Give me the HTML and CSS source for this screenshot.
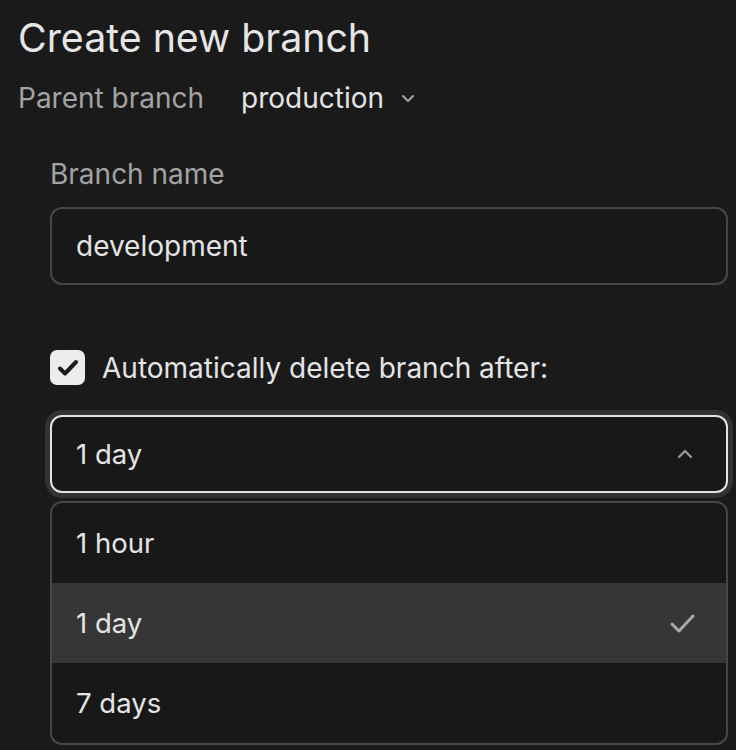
FILE: index.html
```html
<!DOCTYPE html>
<html lang="en">
<head>
    <meta charset="UTF-8">
    <meta name="viewport" content="width=device-width, initial-scale=1.0">
    <title>Create new branch</title>
    <link rel="stylesheet" href="styles.css">
</head>
<body>
    <div class="page">
        <h1 class="title">Create new branch</h1>
        <div class="parent-row">
            <span class="parent-label">Parent branch</span>
            <button class="parent-select">
                production
                <svg width="16" height="16" viewBox="0 0 16 16"><path d="M3 6l5 5 5-5" fill="none" stroke="currentColor" stroke-width="2" stroke-linecap="round" stroke-linejoin="round"/></svg>
            </button>
        </div>
        <div class="form">
            <label class="field-label" for="branch-name">Branch name</label>
            <input class="text-input" id="branch-name" type="text" value="development">

            <label class="check-row">
                <span class="checkbox">
                    <svg width="24" height="24" viewBox="0 0 24 24"><path d="M4 12.5l5 5L20 6" fill="none" stroke="currentColor" stroke-width="4" stroke-linecap="round" stroke-linejoin="round"/></svg>
                </span>
                Automatically delete branch after:
            </label>

            <div class="select open">
                <span>1 day</span>
                <svg width="18" height="18" viewBox="0 0 18 18"><path d="M3 12l6-6 6 6" fill="none" stroke="currentColor" stroke-width="2.2" stroke-linecap="round" stroke-linejoin="round"/></svg>
            </div>
            <ul class="menu">
                <li class="menu-item">1 hour</li>
                <li class="menu-item selected">
                    1 day
                    <svg width="30" height="30" viewBox="0 0 30 30"><path d="M4 16l7 7L25 8" fill="none" stroke="currentColor" stroke-width="3" stroke-linecap="round" stroke-linejoin="round"/></svg>
                </li>
                <li class="menu-item">7 days</li>
            </ul>
        </div>
    </div>
</body>
</html>
```

FILE: styles.css
```css
:root {
    --bg: #1a1a1a;
    --field-bg: #181818;
    --border: #474747;
    --text: #e4e4e4;
    --muted: #a3a3a3;
    --hover: #363636;
}
body {
    margin: 0;
    background: var(--bg);
    color: var(--text);
    font-family: 'Inter', sans-serif;
}
.page {
    padding: 14px 8px 0 18px;
}
.title {
    margin: 0;
    font-size: 39.3px;
    line-height: 48px;
    font-weight: 400;
    color: #e6e6e6;
}
.parent-row {
    display: flex;
    align-items: center;
    gap: 37px;
    margin-top: 16px;
    height: 40px;
    font-size: 28px;
}
.parent-label {
    color: var(--muted);
}
.parent-select {
    display: flex;
    align-items: center;
    gap: 16px;
    padding: 0;
    border: none;
    background: none;
    color: var(--text);
    font: inherit;
}
.parent-select svg {
    color: #a8a8a8;
}
.form {
    display: flex;
    flex-direction: column;
    padding-left: 32px;
    margin-top: 38px;
}
.field-label {
    font-size: 28px;
    line-height: 36px;
    color: var(--muted);
}
.text-input {
    margin-top: 15px;
    height: 78px;
    box-sizing: border-box;
    padding: 0 24px;
    border: 2px solid var(--border);
    border-radius: 12px;
    background: var(--field-bg);
    color: var(--text);
    font: 28px 'Inter', sans-serif;
}
.check-row {
    display: flex;
    align-items: center;
    gap: 17px;
    margin-top: 65px;
    height: 35px;
    font-size: 28px;
    color: var(--text);
}
.checkbox {
    display: flex;
    align-items: center;
    justify-content: center;
    width: 35px;
    height: 35px;
    border-radius: 7px;
    background: #ececec;
    color: #1a1a1a;
}
.select {
    display: flex;
    align-items: center;
    justify-content: space-between;
    margin-top: 30px;
    height: 78px;
    box-sizing: border-box;
    padding: 0 32px 0 24px;
    border: 2px solid #e2e2e2;
    border-radius: 12px;
    background: var(--field-bg);
    box-shadow: 0 0 0 5px #323232;
    font-size: 27.5px;
}
.select svg {
    color: #9a9a9a;
}
.menu {
    list-style: none;
    margin: 8px 0 0;
    padding: 0;
    border: 2px solid var(--border);
    border-radius: 12px;
    background: var(--field-bg);
    overflow: hidden;
}
.menu-item {
    display: flex;
    align-items: center;
    justify-content: space-between;
    height: 80px;
    padding: 0 28px 0 24px;
    font-size: 27.5px;
}
.menu-item.selected {
    background: var(--hover);
}
.menu-item svg {
    color: #a8a8a8;
}
```
